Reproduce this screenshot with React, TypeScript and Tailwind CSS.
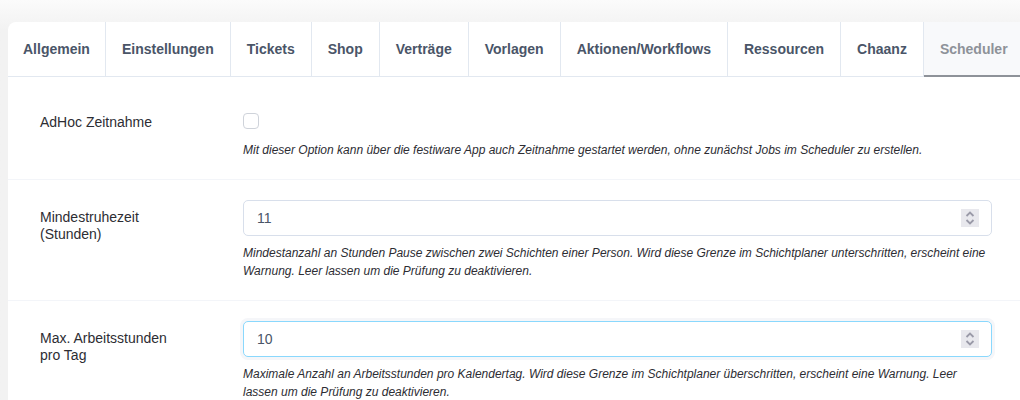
const tabs = [
  "Allgemein",
  "Einstellungen",
  "Tickets",
  "Shop",
  "Verträge",
  "Vorlagen",
  "Aktionen/Workflows",
  "Ressourcen",
  "Chaanz",
];

function Spinner() {
  return (
    <div className="w-[18px] h-[18px] bg-[#e8e8ed] flex items-center justify-center">
      <svg width="12" height="16" viewBox="0 0 12 16" fill="none" stroke="#9a9aa8" strokeWidth="1.8">
        <path d="M2.5 6 6 2.5 9.5 6" />
        <path d="M2.5 10 6 13.5 9.5 10" />
      </svg>
    </div>
  );
}

function NumberField({ value, focused }: { value: string; focused?: boolean }) {
  return (
    <div
      className={
        focused
          ? "h-9 rounded-[5px] border border-[#8ad8fd] shadow-[0_0_0_3px_#f5f6f9] bg-white flex items-center justify-between pl-[13px] pr-[12px]"
          : "h-9 rounded-[5px] border border-[#d8dfeb] bg-white flex items-center justify-between pl-[13px] pr-[12px]"
      }
    >
      <span className="text-sm text-[#4a5568]">{value}</span>
      <Spinner />
    </div>
  );
}

function Row({ label, children, className, labelClass }: { label: React.ReactNode; children: React.ReactNode; className: string; labelClass?: string }) {
  return (
    <div className={"flex pl-8 pr-7 " + className}>
      <div className={"w-[203px] shrink-0 text-sm leading-[17px] text-[#2d2d33] " + (labelClass ?? "")}>{label}</div>
      <div className="flex-1 min-w-0">{children}</div>
    </div>
  );
}

export default function App() {
  return (
    <div
      className="w-[1020px] h-[400px] overflow-hidden bg-gradient-to-b from-[#fbfbfb] to-[#f2f2f2] to-[30px] pt-[22px] pl-2"
      style={{ fontFamily: '"Liberation Sans", Arial, sans-serif' }}
    >
      <div className="bg-white rounded-tl-lg h-[400px]">
        {/* Tabs */}
        <div className="flex h-[55px] border-b border-[#e2e8f0]">
          {tabs.map((t) => (
            <div
              key={t}
              className="flex items-center px-4 first:pl-[15px] first:pr-[15px] border-r border-[#e2e8f0] text-sm font-bold text-[#4a5568]"
            >
              {t}
            </div>
          ))}
          <div className="flex-1 flex items-center pl-4 bg-[#f8f9fb] border-b-2 border-[#8e9299] -mb-px text-sm font-bold text-[#8e9299]">
            Scheduler
          </div>
        </div>

        <Row label="AdHoc Zeitnahme" className="h-[103px] pt-[37px] border-b border-[#f3f5f9]">
          <div className="w-4 h-4 rounded-[4px] border border-[#cfd3da] bg-white -mt-[1px]" />
          <p className="mt-[12px] text-xs leading-[18px] italic text-[#2d2d33]">
            Mit dieser Option kann über die festiware App auch Zeitnahme gestartet werden, ohne zunächst Jobs im Scheduler zu erstellen.
          </p>
        </Row>

        <Row
          label={
            <>
              Mindestruhezeit
              <br />
              (Stunden)
            </>
          }
          labelClass="pt-[9px]"
          className="h-[121px] pt-[20px] border-b border-[#f3f5f9]"
        >
          <NumberField value="11" />
          <p className="mt-[8px] text-xs leading-[18px] italic text-[#2d2d33]">
            Mindestanzahl an Stunden Pause zwischen zwei Schichten einer Person. Wird diese Grenze im Schichtplaner unterschritten, erscheint eine Warnung. Leer lassen um die Prüfung zu deaktivieren.
          </p>
        </Row>

        <Row
          label={
            <>
              Max. Arbeitsstunden
              <br />
              pro Tag
            </>
          }
          labelClass="pt-[9px]"
          className="pt-[20px]"
        >
          <NumberField value="10" focused />
          <p className="mt-[8px] text-xs leading-[18px] italic text-[#2d2d33]">
            Maximale Anzahl an Arbeitsstunden pro Kalendertag. Wird diese Grenze im Schichtplaner überschritten, erscheint eine Warnung. Leer lassen um die Prüfung zu deaktivieren.
          </p>
        </Row>
      </div>
    </div>
  );
}
